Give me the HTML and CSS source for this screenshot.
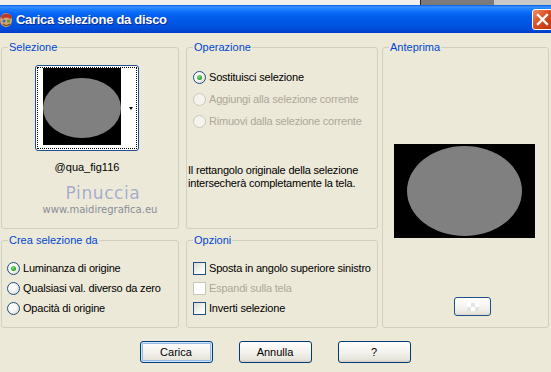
FILE: index.html
```html
<!DOCTYPE html>
<html lang="it">
<head>
    <meta charset="UTF-8">
    <title>Carica selezione da disco</title>
    <link rel="stylesheet" href="styles.css">
</head>
<body>
    <div class="behind">
        <span class="behind-dark"></span>
        <span class="behind-light"></span>
    </div>
    <div class="titlebar">
        <svg class="app-icon" width="14" height="18" viewBox="0 0 14 18">
            <ellipse cx="6" cy="9" rx="6" ry="7" fill="#d9a36a"/>
            <path d="M1 5 Q6 0 12 5 L11 8 Q6 5 2 8 Z" fill="#c0392b"/>
            <circle cx="4" cy="10" r="1.5" fill="#2e6fd8"/>
            <circle cx="8.5" cy="10" r="1.5" fill="#3aa83a"/>
            <path d="M3 13 Q6 16 10 13" stroke="#7a4a20" stroke-width="1.2" fill="none"/>
        </svg>
        <span class="title">Carica selezione da disco</span>
        <span class="close">
            <svg width="13" height="13" viewBox="0 0 13 13">
                <path d="M2 2 L11 11 M11 2 L2 11" stroke="#fff" stroke-width="2.4" stroke-linecap="square"/>
            </svg>
        </span>
    </div>

    <div class="client">
        <div class="groups">
            <fieldset class="group sel">
                <legend>Selezione</legend>
                <div class="thumb-col">
                    <div class="thumb">
                        <div class="focus">
                            <svg class="thumb-img" width="78" height="77" viewBox="0 0 78 77">
                                <rect width="78" height="77" fill="#000"/>
                                <ellipse cx="39" cy="40" rx="39" ry="30" fill="#808080"/>
                            </svg>
                            <div class="thumb-arrow"></div>
                        </div>
                    </div>
                    <div class="thumb-name">@qua_fig116</div>
                </div>
                <div class="watermark">
                    <div class="wm-name">Pinuccia</div>
                    <div class="wm-site">www.maidiregrafica.eu</div>
                </div>
            </fieldset>

            <fieldset class="group op">
                <legend>Operazione</legend>
                <div class="rows rows-op">
                    <div class="row"><span class="radio checked"></span>Sostituisci selezione</div>
                    <div class="row disabled"><span class="radio"></span>Aggiungi alla selezione corrente</div>
                    <div class="row disabled"><span class="radio"></span>Rimuovi dalla selezione corrente</div>
                </div>
                <p class="note">Il rettangolo originale della selezione intersecherà completamente la tela.</p>
            </fieldset>

            <fieldset class="group prev">
                <legend>Anteprima</legend>
                <svg class="preview" width="141" height="94" viewBox="0 0 141 94">
                    <rect width="141" height="94" fill="#000"/>
                    <ellipse cx="70.5" cy="47" rx="57.5" ry="45" fill="#808080"/>
                </svg>
                <div class="mini-btn"><span class="checker"></span></div>
            </fieldset>

            <fieldset class="group crea">
                <legend>Crea selezione da</legend>
                <div class="rows rows-small">
                    <div class="row"><span class="radio checked"></span>Luminanza di origine</div>
                    <div class="row"><span class="radio"></span>Qualsiasi val. diverso da zero</div>
                    <div class="row"><span class="radio"></span>Opacità di origine</div>
                </div>
            </fieldset>

            <fieldset class="group opz">
                <legend>Opzioni</legend>
                <div class="rows rows-small">
                    <div class="row"><span class="check"></span>Sposta in angolo superiore sinistro</div>
                    <div class="row disabled"><span class="check"></span>Espandi sulla tela</div>
                    <div class="row"><span class="check"></span>Inverti selezione</div>
                </div>
            </fieldset>
        </div>

        <div class="buttons">
            <button class="btn default">Carica</button>
            <button class="btn">Annulla</button>
            <button class="btn">?</button>
        </div>
    </div>
</body>
</html>
```

FILE: styles.css
```css
body {
    margin: 0;
    width: 551px;
    height: 372px;
    overflow: hidden;
    background: #ece9d8;
    font-family: "Liberation Sans", Arial, sans-serif;
    font-size: 11px;
    color: #000;
}
.behind {
    height: 5px;
    background: #f1f0ec;
    display: flex;
    padding-left: 420px;
}
.behind-dark {
    width: 73px;
    background: #7b7b7b;
    border-left: 1px solid #222;
}
.behind-light {
    flex: 1;
    background: #c9c9c6;
}
.titlebar {
    height: 28px;
    display: flex;
    align-items: center;
    overflow: hidden;
    background: linear-gradient(#0a55e0 0, #3a92ff 2px, #1e80ff 4px, #0668f5 8px, #005ae9 13px, #0055e3 19px, #004cd9 24px, #0042cc 27px, #003bc2 28px);
}
.app-icon {
    flex: none;
    margin-top: 1px;
}
.title {
    flex: 1;
    margin-left: 2px;
    color: #fff;
    font-size: 13px;
    font-weight: bold;
    letter-spacing: -0.3px;
    text-shadow: 1px 1px 0 #0b2a8a;
}
.close {
    flex: none;
    width: 21px;
    height: 21px;
    margin-right: -2px;
    box-sizing: border-box;
    border: 1px solid #fff;
    border-radius: 3px;
    background: linear-gradient(135deg, #f08f69, #d9491c 50%, #bd3512);
    display: flex;
    align-items: center;
    justify-content: center;
}
.client {
    padding: 8px 0 0 1px;
}
.groups {
    display: grid;
    grid-template-columns: 185px 196px 167px;
    grid-template-rows: 188px 94px;
    row-gap: 5px;
}
.group {
    margin: 0;
    padding: 0;
    min-width: 0;
    border: 1px solid #d0d0bf;
    border-radius: 3px;
}
.group legend {
    margin-left: 6px;
    padding: 0 1px;
    line-height: 13px;
    color: #0046d5;
}
.sel, .crea {
    width: 178px;
    box-sizing: border-box;
}
.op, .opz {
    width: 192px;
    box-sizing: border-box;
}
.prev {
    grid-row: 1 / span 2;
    grid-column: 3;
}
.crea {
    grid-row: 2;
    grid-column: 1;
}
.opz {
    grid-row: 2;
    grid-column: 2;
}

/* selezione */
.thumb-col {
    width: 104px;
    margin: 11px 0 0 33px;
    display: flex;
    flex-direction: column;
    align-items: center;
}
.thumb {
    width: 104px;
    height: 86px;
    box-sizing: border-box;
    border: 1px solid #1c4f8a;
    border-radius: 3px;
    background: #fff;
    padding: 1px;
}
.focus {
    height: 100%;
    box-sizing: border-box;
    border: 1px dotted #000;
    display: flex;
    padding: 0 0 0 5px;
}
.thumb-img {
    display: block;
}
.thumb-arrow {
    margin: 39px 0 0 8px;
    width: 0;
    height: 0;
    border-left: 2.5px solid transparent;
    border-right: 2.5px solid transparent;
    border-top: 3px solid #000;
}
.thumb-name {
    margin-top: 10px;
    line-height: 13px;
}
.watermark {
    margin: 10px 0 0 30px;
    width: 134px;
    text-align: center;
}
.wm-name {
    font-family: "DejaVu Sans", sans-serif;
    font-size: 17px;
    line-height: 18px;
    letter-spacing: 0.6px;
    color: #a5abc4;
    text-shadow: 0 0 1px #fff;
    padding-left: 8px;
}
.wm-site {
    font-family: "DejaVu Sans", sans-serif;
    font-size: 10px;
    line-height: 11px;
    color: #8a8d9a;
    margin-top: 2px;
    padding-left: 2px;
}

/* radios and checks */
.rows {
    display: flex;
    flex-direction: column;
}
.row {
    display: flex;
    align-items: center;
    gap: 3px;
    letter-spacing: -0.2px;
    white-space: nowrap;
}
.rows-op {
    padding: 12px 0 0 6px;
}
.rows-op .row {
    height: 22px;
}
.rows-small {
    padding: 11px 0 0 5px;
}
.opz .rows-small {
    padding-left: 6px;
}
.rows-small .row {
    height: 20px;
}
.row.disabled {
    color: #aca899;
}
.radio {
    flex: none;
    width: 13px;
    height: 13px;
    box-sizing: border-box;
    border: 1px solid #1c5180;
    border-radius: 50%;
    background: radial-gradient(circle at 35% 35%, #fff 30%, #e6e4dc 70%, #d0cdc0);
    display: flex;
    align-items: center;
    justify-content: center;
}
.radio.checked::after {
    content: "";
    width: 5px;
    height: 5px;
    border-radius: 50%;
    background: radial-gradient(circle at 40% 35%, #7ee07e, #21a121 70%);
}
.disabled .radio {
    border-color: #cac8bb;
    background: #f4f3ee;
}
.check {
    flex: none;
    width: 13px;
    height: 13px;
    box-sizing: border-box;
    border: 1px solid #1c5180;
    background: linear-gradient(135deg, #dcdad2, #f6f5f1 60%, #fff);
}
.disabled .check {
    border-color: #cac8bb;
    background: #fff;
}
.note {
    margin: 32px 0 0 1px;
    line-height: 13px;
    letter-spacing: -0.2px;
}

/* anteprima */
.preview {
    display: block;
    margin: 90px 0 0 11px;
}
.mini-btn {
    width: 37px;
    height: 19px;
    box-sizing: border-box;
    margin: 59px 0 0 71px;
    border: 1px solid #1c4f8a;
    border-radius: 3px;
    background: linear-gradient(#fff, #f1f0ea 70%, #dedbd0);
    display: flex;
    align-items: center;
    justify-content: center;
}
.checker {
    width: 12px;
    height: 8px;
    background: conic-gradient(#e4e4e4 25%, #fff 0 50%, #e4e4e4 0 75%, #fff 0) 0 0 / 8px 8px;
}

/* bottom buttons */
.buttons {
    display: flex;
    justify-content: center;
    gap: 26px;
    margin-top: 13px;
    padding-right: 2px;
}
.btn {
    width: 73px;
    height: 22px;
    padding: 0;
    font-family: "Liberation Sans", Arial, sans-serif;
    font-size: 11px;
    color: #000;
    border: 1px solid #003c74;
    border-radius: 3px;
    background: linear-gradient(#fff, #f3f2ed 50%, #e8e6dc 85%, #d6d0c5);
}
.btn.default {
    box-shadow: inset 0 0 0 1px #cee7ff, inset 0 0 0 2px #98b8ea;
}
```
